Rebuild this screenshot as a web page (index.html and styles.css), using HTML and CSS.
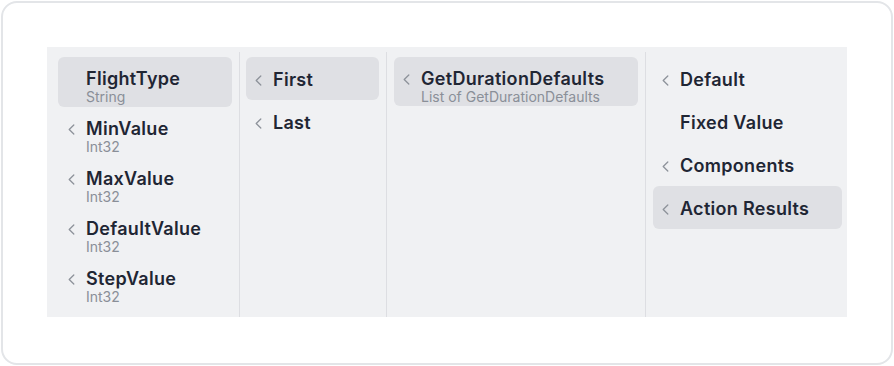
FILE: index.html
```html
<!DOCTYPE html>
<html lang="en">
<head>
    <meta charset="UTF-8">
    <meta name="viewport" content="width=device-width, initial-scale=1.0">
    <title>Column browser</title>
    <link rel="stylesheet" href="styles.css">
</head>
<body>
<section class="card">
    <div class="browser">
        <div class="column col-types">
            <div class="item two-line selected">
                <span class="chev"></span>
                <div class="label">
                    <p class="title">FlightType</p>
                    <p class="sub">String</p>
                </div>
            </div>
            <div class="item two-line">
                <span class="chev"><svg viewBox="0 0 7 11"><polyline points="5.8,1 1.2,5.5 5.8,10"/></svg></span>
                <div class="label">
                    <p class="title">MinValue</p>
                    <p class="sub">Int32</p>
                </div>
            </div>
            <div class="item two-line">
                <span class="chev"><svg viewBox="0 0 7 11"><polyline points="5.8,1 1.2,5.5 5.8,10"/></svg></span>
                <div class="label">
                    <p class="title">MaxValue</p>
                    <p class="sub">Int32</p>
                </div>
            </div>
            <div class="item two-line">
                <span class="chev"><svg viewBox="0 0 7 11"><polyline points="5.8,1 1.2,5.5 5.8,10"/></svg></span>
                <div class="label">
                    <p class="title">DefaultValue</p>
                    <p class="sub">Int32</p>
                </div>
            </div>
            <div class="item two-line">
                <span class="chev"><svg viewBox="0 0 7 11"><polyline points="5.8,1 1.2,5.5 5.8,10"/></svg></span>
                <div class="label">
                    <p class="title">StepValue</p>
                    <p class="sub">Int32</p>
                </div>
            </div>
        </div>

        <div class="column col-range">
            <div class="item selected">
                <span class="chev"><svg viewBox="0 0 7 11"><polyline points="5.8,1 1.2,5.5 5.8,10"/></svg></span>
                <p class="title">First</p>
            </div>
            <div class="item">
                <span class="chev"><svg viewBox="0 0 7 11"><polyline points="5.8,1 1.2,5.5 5.8,10"/></svg></span>
                <p class="title">Last</p>
            </div>
        </div>

        <div class="column col-actions">
            <div class="item two-line short selected">
                <span class="chev"><svg viewBox="0 0 7 11"><polyline points="5.8,1 1.2,5.5 5.8,10"/></svg></span>
                <div class="label">
                    <p class="title">GetDurationDefaults</p>
                    <p class="sub">List of GetDurationDefaults</p>
                </div>
            </div>
        </div>

        <div class="column col-source">
            <div class="item">
                <span class="chev"><svg viewBox="0 0 7 11"><polyline points="5.8,1 1.2,5.5 5.8,10"/></svg></span>
                <p class="title">Default</p>
            </div>
            <div class="item">
                <span class="chev"></span>
                <p class="title">Fixed Value</p>
            </div>
            <div class="item">
                <span class="chev"><svg viewBox="0 0 7 11"><polyline points="5.8,1 1.2,5.5 5.8,10"/></svg></span>
                <p class="title">Components</p>
            </div>
            <div class="item selected">
                <span class="chev"><svg viewBox="0 0 7 11"><polyline points="5.8,1 1.2,5.5 5.8,10"/></svg></span>
                <p class="title">Action Results</p>
            </div>
        </div>
    </div>
</section>
</body>
</html>
```

FILE: styles.css
```css
*{
    margin: 0;
    padding: 0;
    box-sizing: border-box;
}
body{
    background: #ffffff;
    font-family: Inter, "Noto Sans", sans-serif;
    padding: 1px;
}
.card{
    width: 892px;
    height: 364px;
    border: 2px solid #e3e5e8;
    border-radius: 16px;
    padding: 44px;
    background: #ffffff;
}
.browser{
    display: grid;
    grid-template-columns: 193px 147px 259px 201px;
    height: 270px;
    background: #f0f1f3;
    padding-top: 5px;
}
.column{
    display: flex;
    flex-direction: column;
    padding: 5px 7px 10px 7px;
    border-right: 1px solid #dddee2;
}
.col-types{
    padding-left: 11px;
}
.col-range{
    padding-left: 6px;
}
.col-source{
    border-right: none;
    padding-right: 5px;
}
.item{
    display: flex;
    align-items: flex-start;
    height: 43px;
    padding: 13px 0 0 9px;
    border-radius: 6px;
}
.item.two-line{
    height: 50px;
    padding-top: 12px;
}
.item.two-line.short{
    height: 49px;
    padding-top: 12px;
}
.col-types .item{
    padding-left: 10px;
}
.selected{
    background: #dfe0e4;
}
.chev{
    width: 18px;
    height: 20px;
    flex-shrink: 0;
    display: flex;
    align-items: center;
}
.chev svg{
    width: 7px;
    height: 11px;
    fill: none;
    stroke: #8d929a;
    stroke-width: 1.3;
    stroke-linecap: round;
    stroke-linejoin: round;
}
.title{
    font-size: 18px;
    line-height: 20px;
    font-weight: 600;
    letter-spacing: 0.3px;
    color: #1f2634;
    white-space: nowrap;
}
.sub{
    font-size: 14px;
    line-height: 16px;
    color: #8a8f98;
    white-space: nowrap;
}
```
